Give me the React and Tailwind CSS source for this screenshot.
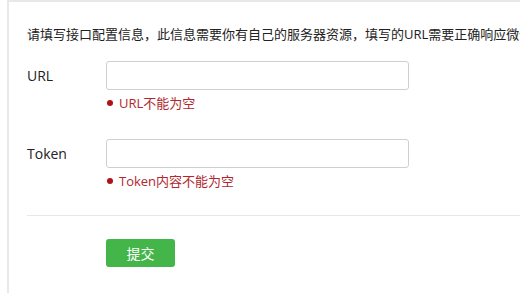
const font = { fontFamily: '"Open Sans", "Noto Sans CJK SC", sans-serif' }

function Field({ label, error }) {
  return (
    <div>
      <div className="flex items-center">
        <label className="w-[79px] shrink-0 text-[14px] text-[#222]">{label}</label>
        <input
          type="text"
          className="w-[303px] h-[29px] rounded-[3px] border border-[#cfcfcf] bg-white px-2 text-[13px] outline-none"
        />
      </div>
      <div className="ml-[79px] h-[18px] mt-[4px] flex items-center gap-[6px] pl-[1px] text-[13px] leading-[18px] text-[#b0282e]">
        <span className="w-[6px] h-[6px] rounded-full bg-[#b0121a]" />
        <span>{error}</span>
      </div>
    </div>
  )
}

export default function App() {
  return (
    <div className="w-[520px] h-[293px] overflow-hidden bg-white pl-[7px]" style={font}>
      <div className="h-full border-l-2 border-t-2 border-[#e8e8e8] bg-white pl-[18px] pt-[23px] overflow-hidden">
        <p className="whitespace-nowrap text-[13px] leading-[18px] text-[#222]">
          请填写接口配置信息，此信息需要你有自己的服务器资源，填写的URL需要正确响应微信发送的Token验证，请阅读消息接口使用指南。
        </p>

        <div className="mt-[18px]">
          <Field label="URL" error="URL不能为空" />
        </div>
        <div className="mt-[27px]">
          <Field label="Token" error="Token内容不能为空" />
        </div>

        <div className="mt-[25px] border-t border-[#e7e7e7]" />

        <div className="pl-[79px] pt-[23px]">
          <button className="w-[69px] h-[28px] rounded-[3px] bg-[#44b549] text-[14px] text-white">
            提交
          </button>
        </div>
      </div>
    </div>
  )
}
